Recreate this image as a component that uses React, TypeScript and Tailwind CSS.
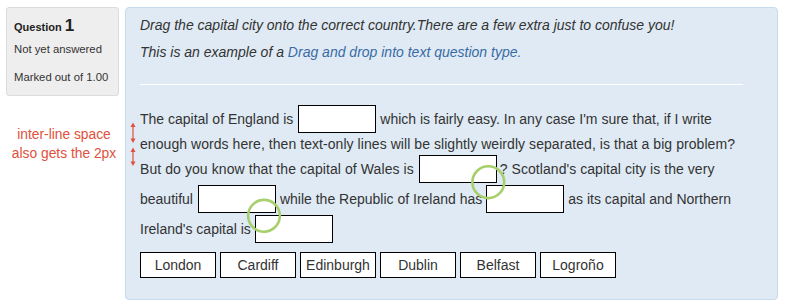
import React from "react";

const FONT = { fontFamily: "'Liberation Sans', Arial, Helvetica, sans-serif" };

function Drop({ className = "" }: { className?: string }) {
  return (
    <span
      className={
        "inline-block w-[78px] h-[28px] border border-black bg-white shrink-0 " +
        className
      }
    />
  );
}

function Choice({ label }: { label: string }) {
  return (
    <div className="w-[76px] h-[26px] border border-black bg-white flex items-center justify-center text-[14px] text-[#333]">
      {label}
    </div>
  );
}

export default function App() {
  return (
    <div
      className="relative w-[785px] h-[308px] bg-white flex items-start pt-[7px] pl-[6px] text-[#333]"
      style={FONT}
    >
      {/* Left column */}
      <div className="w-[113px] flex flex-col">
        <div className="h-[89px] bg-[#eeeeee] border border-[#dcdcdc] rounded-[3px] pl-[7px] pt-[8px]">
          <div className="h-[20px] flex items-baseline gap-[3px] text-[#222]">
            <span className="text-[11px] font-bold">Question</span>
            <span className="text-[17px] font-bold leading-[20px]">1</span>
          </div>
          <div className="mt-[5px] text-[11.3px] leading-[16px]">Not yet answered</div>
          <div className="mt-[12px] text-[11.3px] leading-[16px]">Marked out of 1.00</div>
        </div>
        <div className="mt-[29px] pl-[3px] text-center text-[13.8px] leading-[19px] text-[#e0503c]">
          <div>inter-line space</div>
          <div>also gets the 2px</div>
        </div>
      </div>

      {/* Question formulation */}
      <div className="ml-[6px] w-[653px] h-[293px] bg-[#dfeaf4] border border-[#c7dbec] rounded-[4px] pl-[14px] pt-[7px]">
        <div className="text-[14px] leading-[20px] italic">
          Drag the capital city onto the correct country.There are a few extra just to confuse you!
        </div>
        <div className="mt-[7px] text-[14px] leading-[20px] italic">
          This is an example of a{" "}
          <span className="text-[#3a6aa6]">Drag and drop into text question type.</span>
        </div>
        <div className="mt-[22px] w-[603px] h-[1px] bg-white" />

        <div className="mt-[19px] text-[14px] whitespace-nowrap">
          <div className="h-[30px] flex items-center">
            <span>The capital of England is</span>
            <Drop className="ml-[5px] mr-[4px]" />
            <span>which is fairly easy. In any case I'm sure that, if I write</span>
          </div>
          <div className="h-[20px] flex items-center">
            <span className="tracking-[0.06px]">
              enough words here, then text-only lines will be slightly weirdly separated, is that a big problem?
            </span>
          </div>
          <div className="h-[30px] flex items-center">
            <span className="tracking-[0.08px]">But do you know that the capital of Wales is</span>
            <Drop className="ml-[5px] mr-[3px]" />
            <span className="tracking-[0.05px]">? Scotland's capital city is the very</span>
          </div>
          <div className="h-[30px] flex items-center">
            <span>beautiful</span>
            <Drop className="ml-[5px] mr-[4px]" />
            <span>while the Republic of Ireland has</span>
            <Drop className="ml-[4px] mr-[4px]" />
            <span>as its capital and Northern</span>
          </div>
          <div className="h-[30px] flex items-center">
            <span>Ireland's capital is</span>
            <Drop className="ml-[4px]" />
          </div>
        </div>

        <div className="mt-[8px] flex gap-[4px]">
          <Choice label="London" />
          <Choice label="Cardiff" />
          <Choice label="Edinburgh" />
          <Choice label="Dublin" />
          <Choice label="Belfast" />
          <Choice label="Logroño" />
        </div>
      </div>

      {/* Overlay annotations */}
      <svg
        className="absolute left-0 top-0 pointer-events-none"
        width="785"
        height="308"
        viewBox="0 0 785 308"
      >
        <g stroke="#e0503c" strokeWidth="1.2" fill="#e0503c">
          <line x1="133" y1="124" x2="133" y2="141" />
          <polygon points="130.5,127 133,122.5 135.5,127" stroke="none" />
          <polygon points="130.5,138.5 133,143 135.5,138.5" stroke="none" />
          <line x1="133" y1="149" x2="133" y2="164" />
          <polygon points="130.5,152 133,147.5 135.5,152" stroke="none" />
          <polygon points="130.5,161.5 133,166 135.5,161.5" stroke="none" />
        </g>
        <circle cx="488.3" cy="182.2" r="15.9" fill="none" stroke="#a7cf6c" strokeWidth="2.6" />
        <circle cx="264" cy="215.8" r="15.9" fill="none" stroke="#a7cf6c" strokeWidth="2.6" />
      </svg>
    </div>
  );
}
